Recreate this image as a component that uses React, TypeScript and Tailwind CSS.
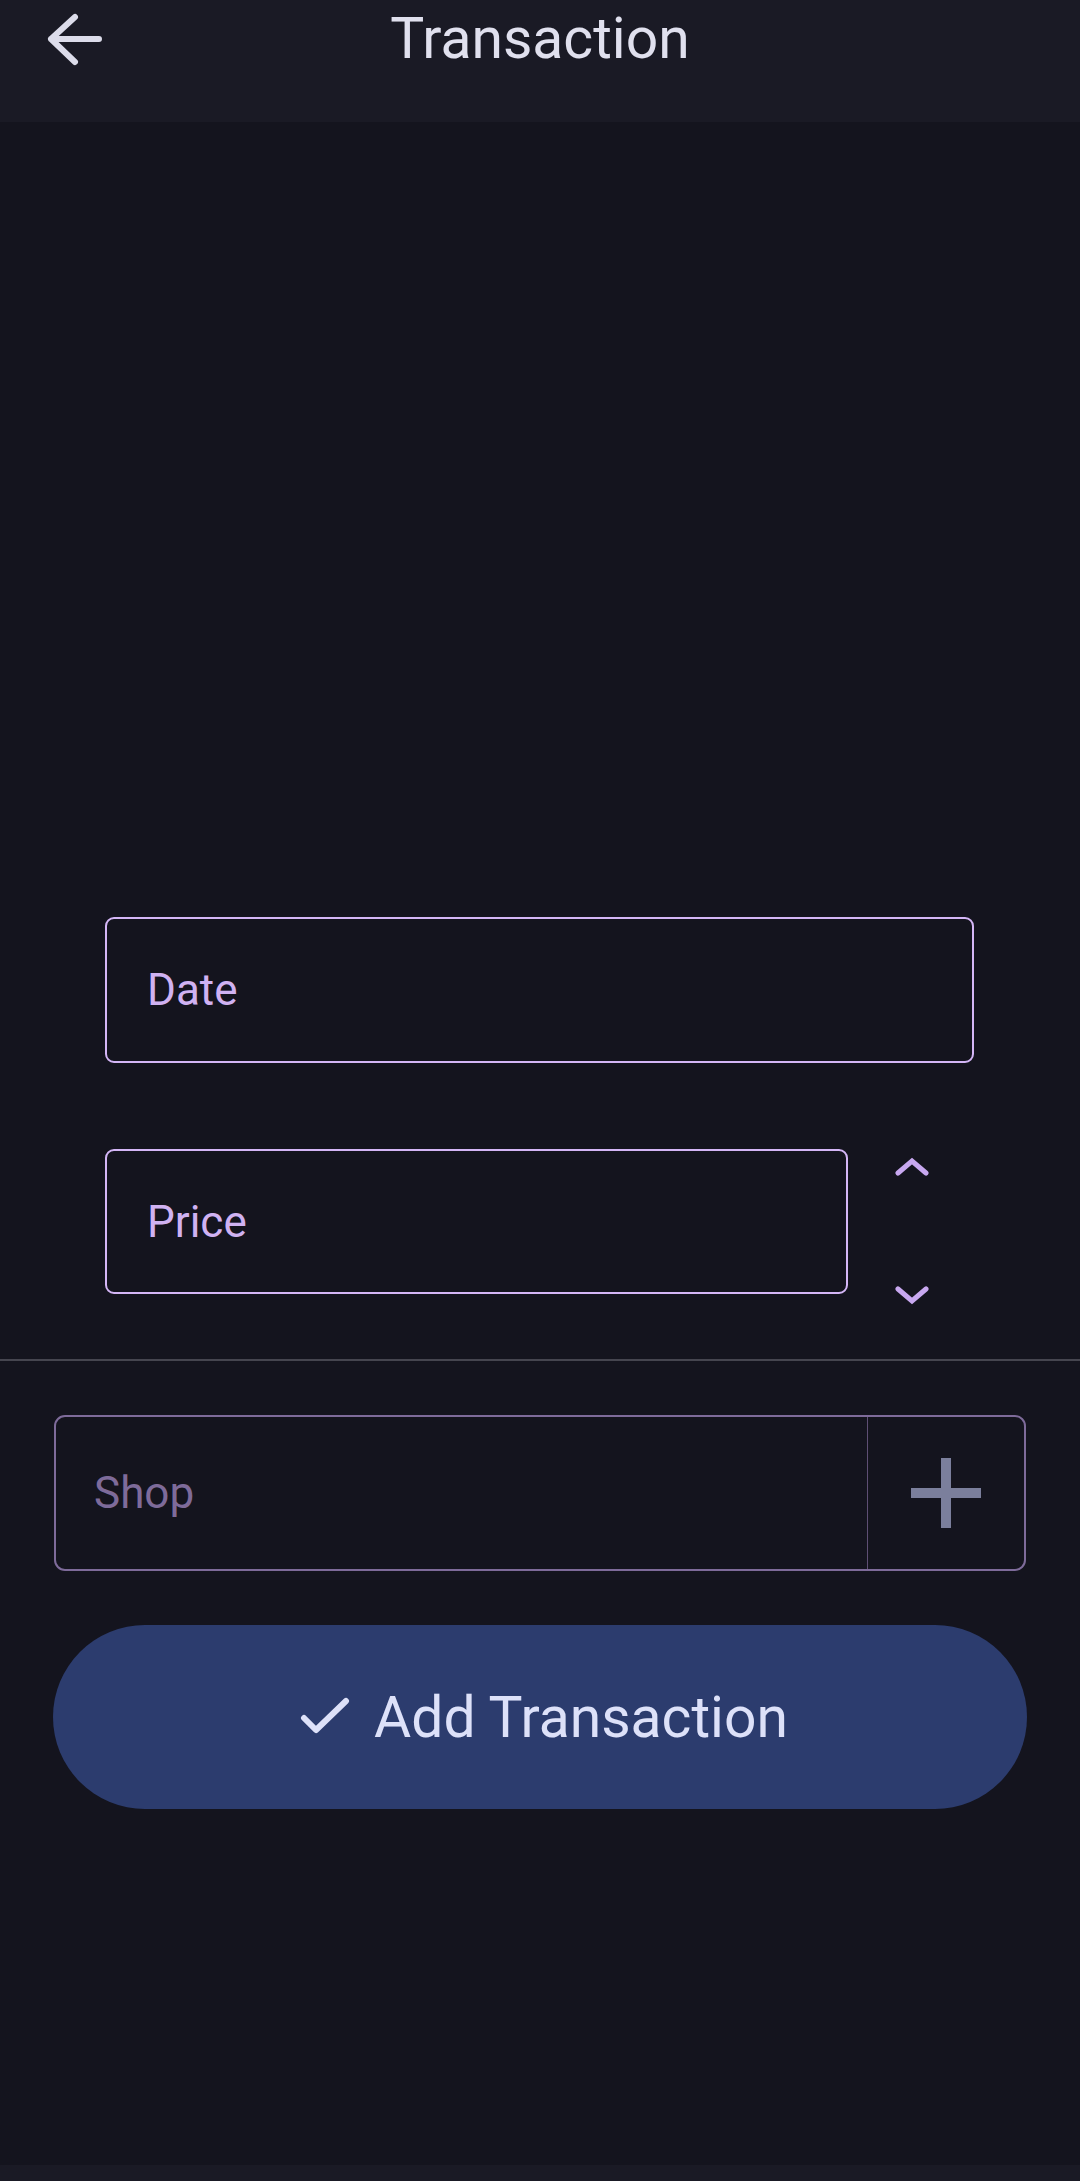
import React from "react";

function BackArrow() {
  return (
    <svg width="60" height="56" viewBox="0 0 60 56" fill="none">
      <path
        d="M30 6 L6 28 L30 51 M6 28 H54"
        stroke="#dcdcea"
        strokeWidth="6"
        strokeLinecap="round"
        strokeLinejoin="round"
      />
    </svg>
  );
}

function Chevron({ up }: { up?: boolean }) {
  return (
    <svg width="34" height="20" viewBox="0 0 34 20" fill="none">
      <path
        d={up ? "M3 16 L17 4 L31 16" : "M3 4 L17 16 L31 4"}
        stroke="#c8a8f0"
        strokeWidth="5"
        strokeLinecap="round"
        strokeLinejoin="miter"
      />
    </svg>
  );
}

function CheckIcon() {
  return (
    <svg width="52" height="40" viewBox="0 0 52 40" fill="none">
      <path
        d="M4 21 L16 33 L46 4"
        stroke="#dde1f9"
        strokeWidth="6"
        strokeLinecap="round"
        strokeLinejoin="round"
      />
    </svg>
  );
}

export default function App() {
  return (
    <div
      className="flex h-[2181px] w-[1080px] flex-col bg-[#14141e]"
      style={{ fontFamily: "Roboto, 'Noto Sans', sans-serif" }}
    >
      {/* top bar */}
      <header className="h-[122px] shrink-0 bg-[#1a1a25]">
        <div className="grid h-[76px] grid-cols-[1fr_auto_1fr] items-center">
          <div className="pl-[45px] pt-[1px]">
            <BackArrow />
          </div>
          <h1 className="text-[57px] leading-none text-[#e0e0ee]">Transaction</h1>
          <div />
        </div>
      </header>

      <main className="flex flex-1 flex-col">
        <div className="h-[795px]" />

        {/* Date */}
        <div className="pl-[105px]">
          <div className="flex h-[146px] w-[869px] items-center rounded-[9px] border-2 border-[#d4b6f6] pl-[40px]">
            <span className="text-[44px] text-[#d0b2f2]">Date</span>
          </div>
        </div>

        {/* Price + stepper */}
        <div className="mt-[86px] flex items-start pl-[105px]">
          <div className="flex h-[145px] w-[743px] items-center rounded-[9px] border-2 border-[#d4b6f6] pl-[40px]">
            <span className="text-[44px] text-[#d0b2f2]">Price</span>
          </div>
          <div className="ml-[47px] flex flex-col gap-[108px] pt-[8px]">
            <Chevron up />
            <Chevron />
          </div>
        </div>

        <div className="mt-[54px] h-[2px] w-full bg-[#45454f]" />

        {/* Shop */}
        <div className="mt-[54px] px-[54px]">
          <div className="flex h-[156px] w-[972px] rounded-[11px] border-2 border-[#7e6b9a]">
            <div className="flex flex-1 items-center pl-[38px]">
              <span className="text-[44px] text-[#7e6b9a]">Shop</span>
            </div>
            <div className="flex w-[157px] items-center justify-center border-l border-[#5e4f74]">
              <div className="relative h-[70px] w-[70px]">
                <div className="absolute left-[30px] top-0 h-[70px] w-[10px] bg-[#7b7f9c]" />
                <div className="absolute left-0 top-[30px] h-[10px] w-[70px] bg-[#7b7f9c]" />
              </div>
            </div>
          </div>
        </div>

        {/* Add button */}
        <div className="mt-[54px] px-[53px]">
          <button className="flex h-[184px] w-[974px] items-center justify-center gap-[22px] rounded-full bg-[#2c3c6e] pl-[8px]">
            <CheckIcon />
            <span className="text-[57px] leading-none text-[#dde1f9]">Add Transaction</span>
          </button>
        </div>
      </main>

      <div className="h-[16px] shrink-0 bg-[#1a1a25]" />
    </div>
  );
}
